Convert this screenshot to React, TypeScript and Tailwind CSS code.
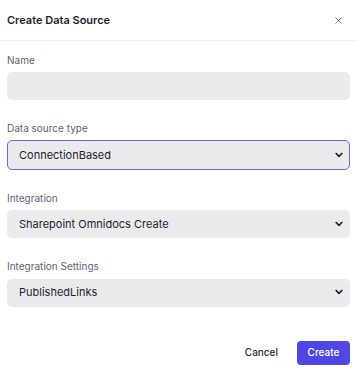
import { X } from "lucide-react";

const Chevron = () => (
    <svg
        width="8"
        height="6"
        viewBox="0 0 8 6"
        className="pointer-events-none absolute right-[7px] top-1/2 -translate-y-1/2"
    >
        <path d="M1.2 1.5 L4 4.3 L6.8 1.5" fill="none" stroke="#1f1d33" strokeWidth="1.7" strokeLinecap="round" strokeLinejoin="round" />
    </svg>
);

const SelectField = ({
    label,
    value,
    focused = false,
}: {
    label: string;
    value: string;
    focused?: boolean;
}) => {
    return (
        <div className="flex flex-col">
            <label className="text-[10px] leading-[14px] text-[#615f74] mb-[5px]">{label}</label>
            <div className="relative">
                <select
                    defaultValue={value}
                    className={
                        focused
                            ? "w-full h-[30px] appearance-none rounded-[5px] border border-[#6c66ee] bg-[#ebebed] pl-[11px] text-[11px] text-[#1f1d33] outline-none"
                            : "w-full h-[28px] appearance-none rounded-[5px] bg-[#ebebed] pl-[12px] text-[11px] text-[#1f1d33] outline-none"
                    }
                >
                    <option>{value}</option>
                </select>
                <Chevron />
            </div>
        </div>
    );
};

export default function App() {
    return (
        <main className="w-[357px] h-[373px] bg-white font-['Inter',sans-serif]">
            <div className="flex items-center justify-between h-[41px] px-[7px] border-b border-[#eeeef0]">
                <h1 className="text-[11px] font-semibold text-[#1f1d33]">Create Data Source</h1>
                <X size={11} strokeWidth={1.6} className="text-[#4a4860] mr-[6px]" />
            </div>
            <div className="flex flex-col gap-[21px] px-[7px] pt-[12px]">
                <div className="flex flex-col">
                    <label className="text-[10px] leading-[14px] text-[#615f74] mb-[5px]">Name</label>
                    <input className="w-full h-[28px] rounded-[5px] bg-[#ebebed] outline-none" />
                </div>
                <SelectField label="Data source type" value="ConnectionBased" focused />
                <SelectField label="Integration" value="Sharepoint Omnidocs Create" />
                <SelectField label="Integration Settings" value="PublishedLinks" />
            </div>
            <div className="flex items-center justify-end gap-[19px] px-[7px] mt-[34px]">
                <button className="text-[10px] font-medium text-[#2a2840]">Cancel</button>
                <button className="h-[24px] w-[53px] rounded-[4px] bg-[#4f46e5] text-[10px] font-medium text-white">
                    Create
                </button>
            </div>
        </main>
    );
}
